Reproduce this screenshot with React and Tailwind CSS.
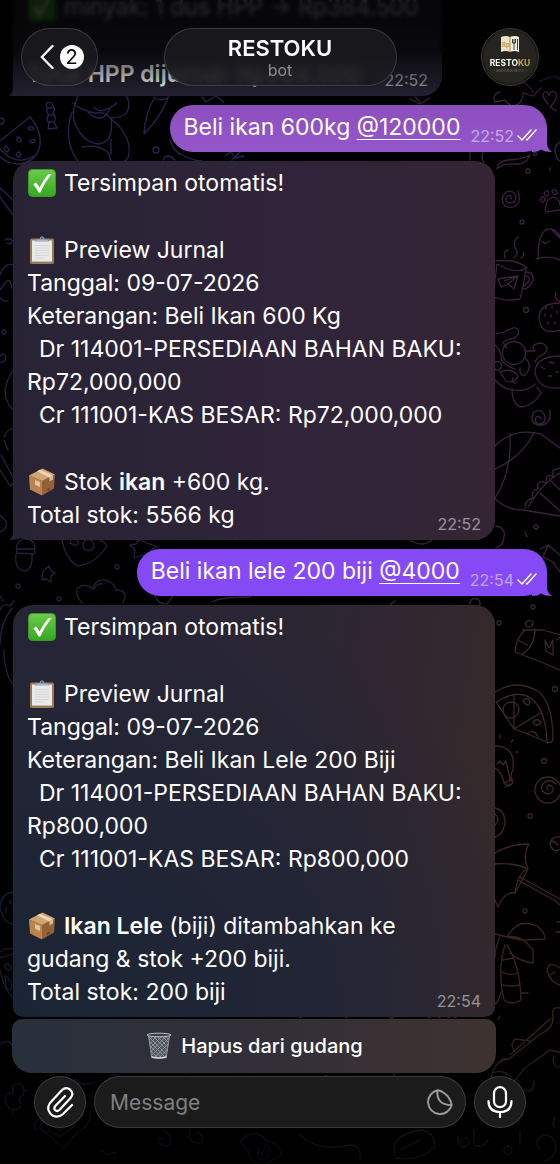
function CheckEmoji() {
  return (
    <svg viewBox="0 0 28 28" className="inline-block w-7 h-7 ml-px mr-2 -mt-1" aria-hidden="true">
      <defs>
        <linearGradient id="checkGreen" x1="0" y1="0" x2="0" y2="1">
          <stop offset="0" stopColor="#6ccb4c" />
          <stop offset="1" stopColor="#34a821" />
        </linearGradient>
      </defs>
      <rect x="0.5" y="0.5" width="27" height="27" rx="4" fill="url(#checkGreen)" stroke="#43962c" />
      <path d="M5.2 15.2 8 13.5q2.2 2.4 3.5 5Q15.500 10.500 20.500 5h3Q17 13 12.300 23.500h-1.800Q8.500 19 5.200 15.200z" fill="#fff" />
    </svg>
  );
}

function ClipboardEmoji() {
  return (
    <svg viewBox="0 0 28 28" className="inline-block w-7 h-7 ml-px mr-2 -mt-1" aria-hidden="true">
      <rect x="2" y="2.500" width="24" height="25.500" rx="1.500" fill="#9a7850" />
      <path d="M4 4.500h20v20.500H4z" fill="#e9e9ea" />
      <path d="M4 25h20v1H4z" fill="#bcbcc0" />
      <path d="M7 9.500h14M7 12h14M7 14.500h14M7 17h14M7 19.500h14M7 22h9" stroke="#d2d2d5" strokeWidth="0.8" />
      <path d="M7 5.500V4q0-1 1.500-1h3Q12 .3 14 .3T16.500 3h3Q21 3 21 4v1.500z" fill="#8b98ac" />
      <path d="M8 4.800h12" stroke="#c7d0dc" strokeWidth="0.8" />
      <circle cx="14" cy="2.300" r="0.800" fill="#3c4655" />
    </svg>
  );
}

function BoxEmoji() {
  return (
    <svg viewBox="0 0 28 28" className="inline-block w-7 h-7 ml-px mr-2 -mt-1" aria-hidden="true">
      <path d="M1 7.500 14 13v14.500L2 21.500z" fill="#b98450" />
      <path d="M27 6.500 14 13v14.500L26 20.500z" fill="#936236" />
      <path d="M1 7.500 14.500.5 27 6.500 14 13z" fill="#d3a471" />
      <path d="m9 3.300 3-1.500L25 7.500l-3.500 2z" fill="#ecd6b8" />
      <path d="m21.500 9.300 3.500-1.800v4l-3.500 2z" fill="#d8b992" />
      <path d="m7 12 5 2v5l-5-2.200z" fill="#e2c5a2" />
      <path d="m19 21 3-1.500v2l-3 1.500z" fill="#6c4523" />
    </svg>
  );
}

function TrashEmoji() {
  return (
    <svg viewBox="0 0 28 28" className="w-7 h-7" aria-hidden="true">
      <path d="M3 3.500h22l-3.500 22q-7.500 2-15 0z" fill="#50555d" />
      <path
        d="M4 8 8 4l15 15M4.500 12 12 4l11 11M5 16 17 4l7 7M5.500 20 21 4.500l3 3M6 24 24 6M9 26 23 12M13.500 26 23 17M18 26l4-4M4 5l18 18M4 9l17 17M5 14l12 12M6 19l7 7"
        fill="none"
        stroke="#a5aab0"
        strokeWidth="0.7"
      />
      <path d="m3.500 3.500 3.200 21.500q7.300 2 14.600 0l3.200-21.500" fill="none" stroke="#8d9299" strokeWidth="1" />
      <ellipse cx="14" cy="3" rx="12" ry="1.800" fill="#3b3f46" stroke="#b9bdc2" strokeWidth="1" />
      <path d="M6.500 25q7.500 2.200 15 0" fill="none" stroke="#d5d7da" strokeWidth="1.500" />
    </svg>
  );
}

function Ticks() {
  return (
    <svg viewBox="0 0 20 12" className="w-5 h-3 mb-px" fill="none" stroke="#fff" strokeWidth="1.500" strokeLinecap="round" strokeLinejoin="round" aria-hidden="true">
      <path d="m1 7 4 4 9-10M9.500 10.500l.5.5 9-10" />
    </svg>
  );
}

function Doodles() {
  return (
    <svg className="absolute left-0 top-0 w-[560px] h-[1164px]" viewBox="0 0 560 1164" fill="none" strokeWidth="1.300" strokeLinecap="round" strokeLinejoin="round" aria-hidden="true">
      <defs>
        <linearGradient id="inkRight" gradientUnits="userSpaceOnUse" x1="0" y1="60" x2="0" y2="1164">
          <stop offset="0" stopColor="#3b1f46" />
          <stop offset="0.400" stopColor="#38243a" />
          <stop offset="0.650" stopColor="#3c2723" />
          <stop offset="0.870" stopColor="#38221c" />
          <stop offset="1" stopColor="#100c0b" />
        </linearGradient>
        <linearGradient id="inkLeft" gradientUnits="userSpaceOnUse" x1="0" y1="60" x2="0" y2="1164">
          <stop offset="0" stopColor="#2a2350" />
          <stop offset="0.500" stopColor="#232039" />
          <stop offset="0.870" stopColor="#131830" />
          <stop offset="1" stopColor="#08090f" />
        </linearGradient>
      </defs>

      {/* left side */}
      <g stroke="url(#inkLeft)">
        <path d="M0 141 30 117q12 14 10 28-4 18-22 19-10 0-18-7M0 149q16 18 34 7" />
        <path d="M28 128q4-3 6 1-5 2-6-1zM17 141q-1-6 3-3 4 6-3 3zM30 141q5-4 5 1-5 2-5-1zM4 149q2-6 5 1-3 4-5-1zM16 155q3-6 5 0-3 4-5 0z" />
        <circle cx="1" cy="121" r="3" />
        <path d="M47 103q5-2 6 3 3 3 0 7 4 4 1 9l3 6-9 1 1-6q-4-4 0-8-4-4-1-7-3-3-1-5zM48 108h5M48 115h6M49 122h5" />
        <path d="M78 96q-6 12-4 25 8 22 25 23 15-2 12-25-5-8-16-6-15-3-22-10M72 112q-10 30 8 52M88 112q15 14 22-4M94 107q6 9 23-4M120 90q14 10 6 24-7 4-15 4M82 147q15-3 24 4 5 3 5 14M110 118q24 19 18 40l-8 8M111 139v15" />
        <path d="M155 97q-10 16-11 37 16-16 24-36M155 98q7 4 14-1" />
        <circle cx="156" cy="150" r="3" />
        <path d="M170 140q4 12 12 15 12 6 20 6M163 160q4-8 12 0M202 97l4 5 10-6 8 6M225 156l6-4 4 6 9-2M232 160l10-10" />
        <path d="M0 188 13 200M0 197l13 18M5 240q4-3 8 1-2 4-6 2M0 275q5-13 13-10M0 298q3 4 8 3M0 290q4-6 7-9t5 7" />
        <circle cx="4" cy="332" r="2" />
        <path d="M0 356l3-2 3 2-1 5-5 2M13 370q-6 9-8 20 0 12 8 20M4 437q2-6 9-9M4 440l4 10M0 470l10 16 3-3M1 455l12 22M0 515l6 6q2 8-6 11" />
        <path d="M17 553q-3-11 8-15 13 3 9 16zM17 549h17M16 554q-2 16 9 17 8-2 7-17" />
        <path d="M62 540q4 20 16 26 17-2 29-20-5-11-41-8M70 543q1-6 7-3 4 6-3 5zM83 546q0-8 8-6 6 5 0 10-7 2-8-4z" />
        <path d="m139 540-3 4-6 1 5 5-1 8 8-3 9 5-1-9 6-5-9-3zM43 571l6-5 2 5 4 2-4 3 0 6-5-3-4 1z" />
        <circle cx="117" cy="567" r="2" />
        <circle cx="18" cy="586" r="2" />
        <circle cx="59" cy="599" r="2" />
        <path d="M82 603q-9-11-3-16 7-4 14 2 2-10 12-9 10 3 11 10 10 0 9 8l-2 5M95 588q2-5 8-4M0 610q3-8 10-4l4-5M12 608q-12 16-12 36M4 650q0 24 10 36M0 596l3 5M155 596q3 8 12 8l6-8M212 602q8-5 39-5M236 540q8-12 20 0" />
        <path d="M13 892q-12 2-13 14 3 17 13 18M10 900v4M6 908v5M0 952q7-5 13-3M0 958l13-4M4 966q4-5 8 2-4 5-8-2zM5 976q6 2 7 12-5 5-6-3zM0 970q4 20 13 28M0 1044q10-6 12 2" />
        <path d="M13 1086q9-7 11 5 0 5-5 7 5 10-3 12-10 0-11-11 0-8 8-5zM24 1091l3-1M13 1110v4" />
        <path d="M36 1130q-5-6 4-12M90 1112q2 12-12 20l-14 16-24-20 3-8 17 10 18-12M48 1130l12 7 16-12M164 1140q-8-5-5 3 7 6 12 0 0-9-8-13M190 1130q-4 14 12 13 3-10-6-10M240 1142q14-16 27-1 13 2 14 14-13 7-14 9-18 1-18-12zM258 1147q2 14 7 0 2-7 4 0-2 10-2 12-8 3-9-3zM100 1150l8 4 8-2-3 8" />
        <path d="M75 1078q4 10 20 4M83 1083v2M108 1078q8-7 13 1M185 1074l4-2" />
      </g>

      {/* right side */}
      <g stroke="url(#inkRight)">
        <path d="M500 92q-8 2-5 10l10-2 6 6q12-1 12-13l10 3 8-8M518 80q10 3 15 12M548 104q-8-10-3-12 4-1 4 4 2-8 7-3 2 6-6 14l6 4M540 81l14-5 6 3M410 99l10 5 10-6M415 97l5 5" />
        <path d="M560 142q-6 4-5 10 2 8 5 9M530 155q-4 10-15 9-12-1-18 5 1-8 11-9 12 0 22-5M470 152v8M484 150q-4 8 0 12M550 168v3" />
        <circle cx="535" cy="154" r="1.500" />
        <circle cx="528" cy="171" r="2" />
        <circle cx="522" cy="222" r="2" />
        <path d="M511 199q1-5-4-3-3 5 2 7 7 0 7-7-3-7-10-4-7 7-1 14 9 4 14-4 1-6-1-11" />
        <path d="M546 207q-2 4 1 5 10-2 13-2M546 207q0-8 7-10 7 2 7 8M540 200q4-6 5 0-3 4-5 0zM544 193q4-5 5 1-3 5-5-1zM552 191q4-4 5 2-3 4-5-2z" />
        <path d="M538 258q0-30 13-29 6 1 9 8M536 259q14-4 24 1M542 241q4 5 7 0M552 230l8 8" />
        <path d="M505 258q-2-7 3-8M514 258q6-5 1-10-2-7 3-11M521 258q4-3 2-6M496 261q3-1 16 0 9 2 15 7-11 7-30-4l-4 33q15 5 27 2 3-10 6-31M526 272q8 0 7 8-4 10-11 9M526 276q4 0 3 5l-5 5M498 279l20-3-4 13-6-5-7 3zM504 281l14-5-10 8" />
        <circle cx="526" cy="310" r="2.500" />
        <path d="M560 303q-20 0-21 14 1 12 8 14 8 1 13-1M556 292q-2 7 4 10M546 307v2M552 306v2M545 314v2M551 315v2M557 311v2M548 322v2M555 322v2" />
        <circle cx="514" cy="353" r="11.500" />
        <path d="M496 333q2 1 8-1l9-4q7-1 5 7-4 4-9 4l-6 3 4 6M525 351h10q-6-7 7-8 8 4 3 10-7 3-10 9M525 358q9 8-1 18-5-2-4-8M495 345q6 5 6 12t14 12M495 362q8-2 6 6-3 4-6 1M495 380q10 12 28 10 10-2 12-6M500 372q12-5 18 4-3 8-12 5zM513 378q-2 5 3 5M512 389q0 16 10 18 12-2 19-14l-4-6M560 356q-24 0-25 16 3 18 25 16M541 367l4 2M549 362l5 1M548 376h4M556 372h2" />
        <path d="M541 419q-1-4-5-2-2 6 3 7 7 0 6-8-3-8-11-4-5 9 3 13 9 2 13-7V410" />
        <path d="M495 446q18-19 46-12l19 14M495 499q12 11 28 11l37 6M510 434q2 38-15 64M534 433q-12 24-39 36M525 508q0-8 8-10-2-8 5-9-2-10 8-6 0-11 7-6l0-7 7-2M528 507q15-25 32-34M540 493l20 18M550 480l10 10" />
        <path d="M496 526q10 2 8 11 0 8-8 11M410 540q12 8 22 0M525 532l2 5" />
        <circle cx="536" cy="527" r="2" />
        <path d="M540 549l8-4 12 10M548 545l-5 12 10 5M553 562l7 10M470 604q0-7 8-5 5 6-2 9M395 601l-10 8" />
        <circle cx="533" cy="607" r="2" />
        <circle cx="499" cy="623" r="2" />
        <path d="M525 624q3-6 8-2 0 6-6 5zM523 630h20l17 5M525 630q-10 10-10 22l26 10 19 8M535 629q0 16-12 25M519 641l9 4M545 640l4 8 4-8v15l-7-4zM557 640l3-3" />
        <circle cx="555" cy="689" r="2.500" />
        <path d="M495 692q22-14 44 0 14 12 14 48-2 4-7 2-22-10-32-13L496 702q24-15 38-1 12 12 13 41M514 695v34l28-17M523 701q4-5 7 0-1 8-7 0zM533 722q5-5 8 1-5 5-8-1z" />
        <circle cx="511" cy="710" r="8" />
        <path d="M527 734q7-6 11 3" />
        <path d="M495 746q21 0 18 24-4 6 0 13-6 5-9-1-3-11-9-14M497 764l3-3 3 4 3-4 4 18M504 783l9-4M505 787l6-2M500 738v-3M511 742l2-2M516 752h2" />
        <circle cx="544" cy="761" r="2.500" />
        <circle cx="548" cy="790" r="13" />
        <path d="M548 790q-3-5 2-5 7 5-1 9-9-1-7-9 6-8 14-1" />
        <circle cx="530" cy="816" r="2" />
        <path d="M495 808q10 2 10 16-3 12-10 13M495 814q6 5 0 11M558 845q-6-7-8-1 3 10 10 5M560 837q-9-1-10 7" />
        <path d="M495 853q15-9 34-9-7 12-1 25-10 3-13 24-10-2-17 14l-3-7M495 864q18-2 33 5M515 893l13-24" />
        <path d="M520 877l40 22M518 880l36 20M554 900l6 5" />
        <circle cx="525" cy="911" r="2" />
        <path d="M495 934l12 3q11-20 30-11 8 6 8 13l-24 1-14-3q14-3 26 13v13q-12-1-23-10M500 937q-5 10-5 20M505 945q-8 25-1 55 8 6 17 0-1-35-14-55M503 960l10-2M502 972q7 4 15 1M503 985q8 2 17 0M495 1004q4-3 6-12M522 993h6" />
        <path d="M560 968q-12-8-13 3 4 12 13 14M550 975l5-3M557 922h3M556 932h4M498 1020l2-4" />
        <path d="M560 1008q-9-2-7 9 1 11-14 18l-30 24q-12 1-16 12-5 12 4 14l18-5 10-12 25-18 12 3q6 12 0 15-11 0-8-12M510 1055l40-36M515 1052q-6-8 0-13l15 2M524 1090q10 4 10-9M493 1073q10-4 18 4M501 1062q1-5 6-3" />
        <path d="M474 1130v15q10 4 14-5M520 1132v12M300 1135q20 18 50 10 12 0 10 14M395 1155q-6-20 26-25 15 2 13 18-16 14-38 10M400 1150l20-10M460 1143q2-8 8-4 3 7-4 8-8-2-6-10M540 1150q-8-10 4-15 10 0 12 10 0 14-12 16M555 1118q-4 5 0 10" />
        <circle cx="508" cy="1150" r="4" />
        <path d="M300 1018l3-2M346 1018l2-3M390 1018h3M428 1018q8-5 12 0M448 1018q4-4 8 0M325 1075l4 2M394 1076v-2" />
      </g>
    </svg>
  );
}

function TailLeft() {
  return (
    <svg viewBox="0 0 22 16" className="absolute -left-1 bottom-0 w-[22px] h-4 fill-[#272334]" aria-hidden="true">
      <path d="M4 0v8q0 5-4 7.500 7 1 12-1.500 3 2 10 2V0z" />
    </svg>
  );
}

function Blank() {
  return <div className="h-[34px]" />;
}

function Outgoing({ children, time, color, tail }) {
  return (
    <div className={`relative self-end mr-[13px] h-[47px] pl-3.5 pr-[10px] rounded-[23px] flex items-end ${color}`}>
      <p className="leading-[47px] pb-px whitespace-nowrap">{children}</p>
      <div className="relative z-10 flex items-end gap-[3px] ml-2.5 mb-1.5">
        <time className="text-base leading-5 text-white/50">{time}</time>
        <span className="mb-1"><Ticks /></span>
      </div>
      <svg viewBox="0 0 20 24" className={`absolute -right-[5px] bottom-0 w-5 h-6 ${tail}`} aria-hidden="true">
        <path d="M0 24q6 0 9-2.500Q13 24 20 24q-5-3-5-9V0H0z" />
      </svg>
    </div>
  );
}

function Incoming({ children, time, color, tail }) {
  return (
    <div className={`relative ml-[13px] mr-[65px] pl-3.5 pt-1.5 pb-2 leading-[33px] overflow-visible ${color}`}>
      {tail && <TailLeft />}
      <div className="relative whitespace-nowrap">{children}</div>
      <time className="absolute right-3.5 bottom-1.5 text-base leading-5 text-white/50">{time}</time>
    </div>
  );
}

function Header() {
  return (
    <header className="absolute inset-x-0 top-0 z-20 pt-7 h-[100px]">
      {/* fades the messages scrolled under the bar */}
      <div className="absolute inset-x-0 top-0 h-14 backdrop-blur-[2px]" />
      <div className="absolute inset-0 bg-linear-to-b from-black/85 via-black/75 to-black/0" />
      <div className="relative flex items-center justify-between px-[21px]">
        <button className="w-[77px] h-[58px] rounded-full border border-white/15 bg-[#1b1a1e]/85 backdrop-blur-[3px] flex items-center justify-center gap-1.5 pl-1 text-white" aria-label="Back">
          <svg viewBox="0 0 14 26" className="w-3.5 h-[26px]" fill="none" stroke="currentColor" strokeWidth="2.400" strokeLinecap="round" strokeLinejoin="round" aria-hidden="true">
            <path d="M12.500 2 1.800 13l10.700 11" />
          </svg>
          <span className="w-6 h-6 rounded-full bg-white text-black text-xl leading-6 text-center">2</span>
        </button>
        <div className="w-[233px] h-[58px] rounded-full border border-white/15 bg-[#1b1a1e]/85 backdrop-blur-[4px] text-center pt-[7px]">
          <h1 className="text-[22px] leading-6 font-semibold text-white">RESTOKU</h1>
          <p className="text-base leading-5 text-[#8d8d90]">bot</p>
        </div>
        <div className="w-[77px] flex justify-end">
          <svg viewBox="0 0 58 58" className="w-[58px] h-[58px]" role="img" aria-label="RESTOKU">
            <circle cx="29" cy="29" r="28.500" fill="#1a1a1c" stroke="#39393b" />
            <circle cx="29" cy="29" r="26.500" fill="#26241f" />
            <path d="M20 9q5-2 9 0v15q-4-2-9 0z" fill="#e8dfcc" />
            <path d="M29 9q5-2 9 0v15q-4-2-9 0z" fill="#f4f2ec" />
            <path d="M29 9v15" stroke="#b99a52" strokeWidth="1.200" />
            <path d="M31.500 11v4M33 11v4M34.500 11v4M31.500 15h3M33 15v7M36.500 11v11" stroke="#2b2a26" strokeWidth="0.900" fill="none" />
            <text x="21" y="19" fontSize="6" fontWeight="700" fill="#c39a3e" fontFamily="Inter, sans-serif">Rp</text>
            <text x="29" y="38" fontSize="8.500" fontWeight="700" textAnchor="middle" fill="#fff" fontFamily="Inter, sans-serif">
              RESTO<tspan fill="#c9a050">KU</tspan>
            </text>
            <text x="29" y="44" fontSize="3" textAnchor="middle" fill="#77736a" fontFamily="Inter, sans-serif">— AKUNTANSI RESTO —</text>
          </svg>
        </div>
      </div>
    </header>
  );
}

function Composer() {
  return (
    <form className="relative flex items-center gap-2 px-[34px] pt-[3px] pb-9">
      <button type="button" className="shrink-0 w-[52px] h-[52px] rounded-full border border-white/15 bg-[#1b1b1c] flex items-center justify-center" aria-label="Attach">
        <svg viewBox="0 0 28 32" className="w-7 h-8" fill="none" stroke="#fff" strokeWidth="2.200" strokeLinecap="round" aria-hidden="true">
          <path d="M26 19 17 28q-5 4.500-10.500 1.500Q-.5 24 4 17L16 4q4-3.500 8-.5 4.500 4 .5 8.500L13.500 24q-2.500 2-4.500 0-1.500-2 .5-4.200L19 10" />
        </svg>
      </button>
      <div className="relative flex-1 min-w-0">
        <input
          type="text"
          aria-label="Message"
          placeholder="Message"
          className="block w-full h-[52px] rounded-full border border-white/15 bg-[#1b1b1c] pl-[15px] pr-14 text-[21px] text-white placeholder:text-[#808082]"
        />
        <svg viewBox="0 0 26 26" className="absolute right-[13px] top-[13px] w-[26px] h-[26px]" fill="none" stroke="#9a9a9c" strokeWidth="2" strokeLinejoin="round" aria-hidden="true">
          <path d="M10.500 1.300A12 12 0 1 0 24.700 16Q23 8 17 4 13 1 10.500 1.300zQ9 16 24.700 16" />
        </svg>
      </div>
      <button type="button" className="shrink-0 w-[52px] h-[52px] rounded-full border border-white/15 bg-[#1b1b1c] flex items-center justify-center" aria-label="Voice message">
        <svg viewBox="0 0 26 32" className="w-[26px] h-8" fill="none" stroke="#fff" strokeWidth="2.200" strokeLinecap="round" aria-hidden="true">
          <rect x="7" y="1.200" width="12" height="20" rx="6" />
          <path d="M1.500 15q0 11 11.500 11t11.500-11M13 26v5" />
        </svg>
      </button>
    </form>
  );
}

export default function App() {
  return (
    <div className="relative min-h-screen overflow-hidden bg-black text-white font-['Inter',sans-serif] text-[23px]">
      <Doodles />
      <Header />

      <main className="relative flex flex-col gap-[9px]">
        <div className="relative self-start ml-[13px] w-[429px] -mt-[9px] pl-3.5 pb-[5px] leading-[33px] rounded-br-[20px] bg-[#272334] whitespace-nowrap">
          <TailLeft />
          <div className="relative">
            <p><CheckEmoji />minyak: 1 dus HPP → Rp384.500</p>
            <Blank />
            <p className="font-semibold">Total HPP dijurnal: Rp384.500</p>
          </div>
          <time className="absolute right-3.5 bottom-1.5 text-base leading-5 text-white/60">22:52</time>
        </div>

        <Outgoing time="22:52" color="bg-linear-to-b from-[#8d4fbd] to-[#9455cb]" tail="fill-[#9455cb]">
          Beli ikan 600kg <a href="#120000" className="underline decoration-1 underline-offset-4">@120000</a>
        </Outgoing>

        <Incoming time="22:52" tail color="rounded-[20px] bg-linear-to-r from-[#272334] via-[#30243a] via-60% to-[#352534]">
          <p><CheckEmoji />Tersimpan otomatis!</p>
          <Blank />
          <p><ClipboardEmoji />Preview Jurnal</p>
          <p>Tanggal: 09-07-2026</p>
          <p>Keterangan: Beli Ikan 600 Kg</p>
          <p className="pl-3">Dr 114001-PERSEDIAAN BAHAN BAKU:</p>
          <p>Rp72,000,000</p>
          <p className="pl-3">Cr 111001-KAS BESAR: Rp72,000,000</p>
          <Blank />
          <p><BoxEmoji />Stok <b className="font-semibold">ikan</b> +600 kg.</p>
          <p>Total stok: 5566 kg</p>
        </Incoming>

        <Outgoing time="22:54" color="bg-[#8549f5]" tail="fill-[#8549f5]">
          Beli ikan lele 200 biji <a href="#4000" className="underline decoration-1 underline-offset-4">@4000</a>
        </Outgoing>

        <div>
          <Incoming time="22:54" color="rounded-t-[20px] rounded-b-[10px] bg-[radial-gradient(ellipse_at_bottom_left,#1a2534_0%,#222536_45%,#28253600_80%),linear-gradient(100deg,#262436_0%,#2d2633_60%,#382a28_100%)]">
            <p><CheckEmoji />Tersimpan otomatis!</p>
            <Blank />
            <p><ClipboardEmoji />Preview Jurnal</p>
            <p>Tanggal: 09-07-2026</p>
            <p>Keterangan: Beli Ikan Lele 200 Biji</p>
            <p className="pl-3">Dr 114001-PERSEDIAAN BAHAN BAKU:</p>
            <p>Rp800,000</p>
            <p className="pl-3">Cr 111001-KAS BESAR: Rp800,000</p>
            <Blank />
            <p><BoxEmoji /><b className="font-semibold">Ikan Lele</b> (biji) ditambahkan ke</p>
            <p>gudang &amp; stok +200 biji.</p>
            <p>Total stok: 200 biji</p>
          </Incoming>
          <div className="ml-3 mr-16 mt-0.5">
            <button className="w-full h-[54px] rounded-t-[10px] rounded-b-[20px] bg-linear-to-r from-[#27303b] via-[#322f38] to-[#3e322f] flex items-center justify-center gap-2 text-xl font-medium">
              <TrashEmoji />
              Hapus dari gudang
            </button>
          </div>
          <Composer />
        </div>
      </main>
    </div>
  );
}
